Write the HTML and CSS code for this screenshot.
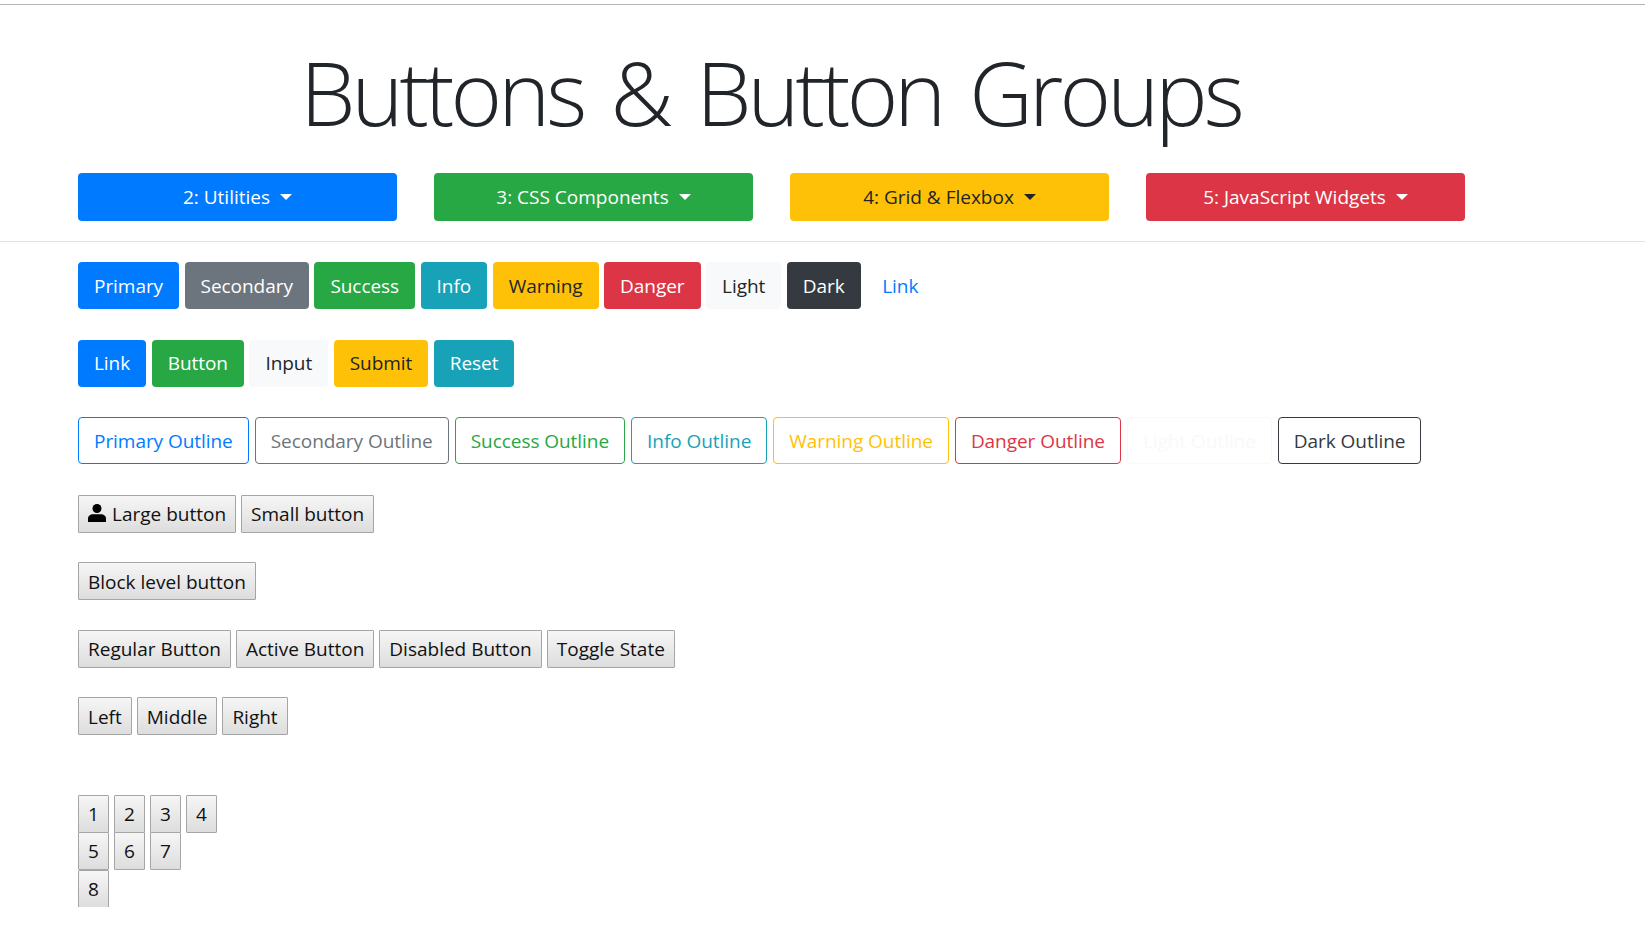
FILE: index.html
```html
<!DOCTYPE html>
<html lang="en">
<head>
<meta charset="UTF-8" />
<title>Buttons &amp; Button Groups</title>
<link rel="stylesheet" href="styles.css">
</head>
<body>

  <header class="page-header">
    <h1>Buttons &amp; Button Groups</h1>
    <nav class="menu-row">
      <a class="btn menu-btn primary">2: Utilities <span class="caret"></span></a>
      <a class="btn menu-btn success">3: CSS Components <span class="caret"></span></a>
      <a class="btn menu-btn warning">4: Grid &amp; Flexbox <span class="caret"></span></a>
      <a class="btn menu-btn danger">5: JavaScript Widgets <span class="caret"></span></a>
    </nav>
  </header>

  <section class="content">
    <div class="row-colored">
      <button class="btn primary">Primary</button>
      <button class="btn secondary">Secondary</button>
      <button class="btn success">Success</button>
      <button class="btn info">Info</button>
      <button class="btn warning">Warning</button>
      <button class="btn danger">Danger</button>
      <button class="btn light">Light</button>
      <button class="btn dark">Dark</button>
      <button class="btn link">Link</button>
    </div>

    <div class="row-colored">
      <a class="btn primary">Link</a>
      <button class="btn success">Button</button>
      <button class="btn light">Input</button>
      <button class="btn warning">Submit</button>
      <button class="btn info">Reset</button>
    </div>

    <div class="row-colored row-outline">
      <button class="btn outline-primary">Primary Outline</button>
      <button class="btn outline-secondary">Secondary Outline</button>
      <button class="btn outline-success">Success Outline</button>
      <button class="btn outline-info">Info Outline</button>
      <button class="btn outline-warning">Warning Outline</button>
      <button class="btn outline-danger">Danger Outline</button>
      <button class="btn outline-light">Light Outline</button>
      <button class="btn outline-dark">Dark Outline</button>
    </div>

    <div class="row-plain">
      <button class="plain">
        <svg class="user-icon" viewBox="0 0 16 16"><circle cx="8" cy="4" r="4"/><path d="M0 16v-3c0-2.500 2-4 4.500-4h7c2.500 0 4.500 1.500 4.500 4v3z"/></svg>
        Large button
      </button>
      <button class="plain">Small button</button>
    </div>

    <div class="row-plain">
      <button class="plain">Block level button</button>
    </div>

    <div class="row-plain">
      <button class="plain">Regular Button</button>
      <button class="plain">Active Button</button>
      <button class="plain">Disabled Button</button>
      <button class="plain">Toggle State</button>
    </div>

    <div class="row-plain">
      <button class="plain">Left</button>
      <button class="plain">Middle</button>
      <button class="plain">Right</button>
    </div>

    <div class="number-grid">
      <button class="plain num">1</button>
      <button class="plain num">2</button>
      <button class="plain num">3</button>
      <button class="plain num">4</button>
      <button class="plain num">5</button>
      <button class="plain num">6</button>
      <button class="plain num">7</button>
      <span></span>
      <button class="plain num">8</button>
    </div>
  </section>

</body>
</html>
```

FILE: styles.css
```css
body {
  margin: 0;
  border-top: 1px solid #b4b4b4;
  margin-top: 4px;
  background: #fff;
  color: #212529;
  font-family: "Open Sans", "Noto Sans", sans-serif;
  font-size: 19px;
}

/* Cabecera */
.page-header {
  border-bottom: 1px solid #e2e2e2;
  padding: 35px 78px 20px;
}
h1 {
  margin: 0 0 29px 0;
  padding-right: 104px;
  text-align: center;
  font-size: 88px;
  font-weight: 300;
  letter-spacing: -3.900px;
  word-spacing: 8px;
  line-height: 104px;
}
.menu-row {
  display: grid;
  grid-template-columns: repeat(4, 319px);
  gap: 37px;
}
.btn.menu-btn {
  height: 48px;
  justify-content: center;
  gap: 10px;
  letter-spacing: 0;
}
.caret {
  width: 0;
  height: 0;
  border-top: 6px solid currentColor;
  border-left: 6px solid transparent;
  border-right: 6px solid transparent;
}

/* Botones de color */
.content {
  padding: 20px 78px 0;
}
.row-colored {
  display: flex;
  gap: 5.500px;
  margin-bottom: 30.500px;
}
.row-outline {
  gap: 6px;
}
.btn {
  display: inline-flex;
  align-items: center;
  box-sizing: border-box;
  height: 47px;
  padding: 0 15px;
  border: 1px solid transparent;
  border-radius: 4px;
  font-family: inherit;
  font-size: 19px;
  letter-spacing: -0.050px;
  white-space: nowrap;
}
.primary { background: #007bff; color: #fff; }
.secondary { background: #6c757d; color: #fff; }
.success { background: #28a745; color: #fff; }
.info { background: #17a2b8; color: #fff; }
.warning { background: #ffc107; color: #212529; }
.danger { background: #dc3545; color: #fff; }
.light { background: #f8f9fa; color: #212529; }
.dark { background: #343a40; color: #fff; }
.link { background: none; color: #007bff; }

.outline-primary { background: #fff; border-color: #007bff; color: #007bff; }
.outline-secondary { background: #fff; border-color: #6c757d; color: #6c757d; }
.outline-success { background: #fff; border-color: #28a745; color: #28a745; }
.outline-info { background: #fff; border-color: #17a2b8; color: #17a2b8; }
.outline-warning { background: #fff; border-color: #ffc107; color: #ffc107; }
.outline-danger { background: #fff; border-color: #dc3545; color: #dc3545; }
.outline-light { background: #fff; border-color: #f8f9fa; color: #f8f9fa; }
.outline-dark { background: #fff; border-color: #343a40; color: #343a40; }

/* Botones sin estilo */
.row-plain {
  display: flex;
  gap: 5px;
  margin-bottom: 29.500px;
}
.plain {
  display: inline-flex;
  align-items: center;
  justify-content: center;
  gap: 6px;
  box-sizing: border-box;
  height: 38px;
  padding: 1px 9px 0;
  border: 1px solid #a5a5a5;
  border-radius: 1px;
  background: linear-gradient(#f6f6f6, #dddddd);
  color: #111;
  font-family: inherit;
  font-size: 19px;
  white-space: nowrap;
}
.user-icon {
  width: 18px;
  height: 18px;
  margin-bottom: 2px;
  fill: #000;
}
.number-grid {
  display: grid;
  grid-template-columns: repeat(4, 31px);
  grid-auto-rows: 37.600px;
  column-gap: 5px;
  margin-top: 59.500px;
}
.plain.num {
  padding: 0;
}
```
